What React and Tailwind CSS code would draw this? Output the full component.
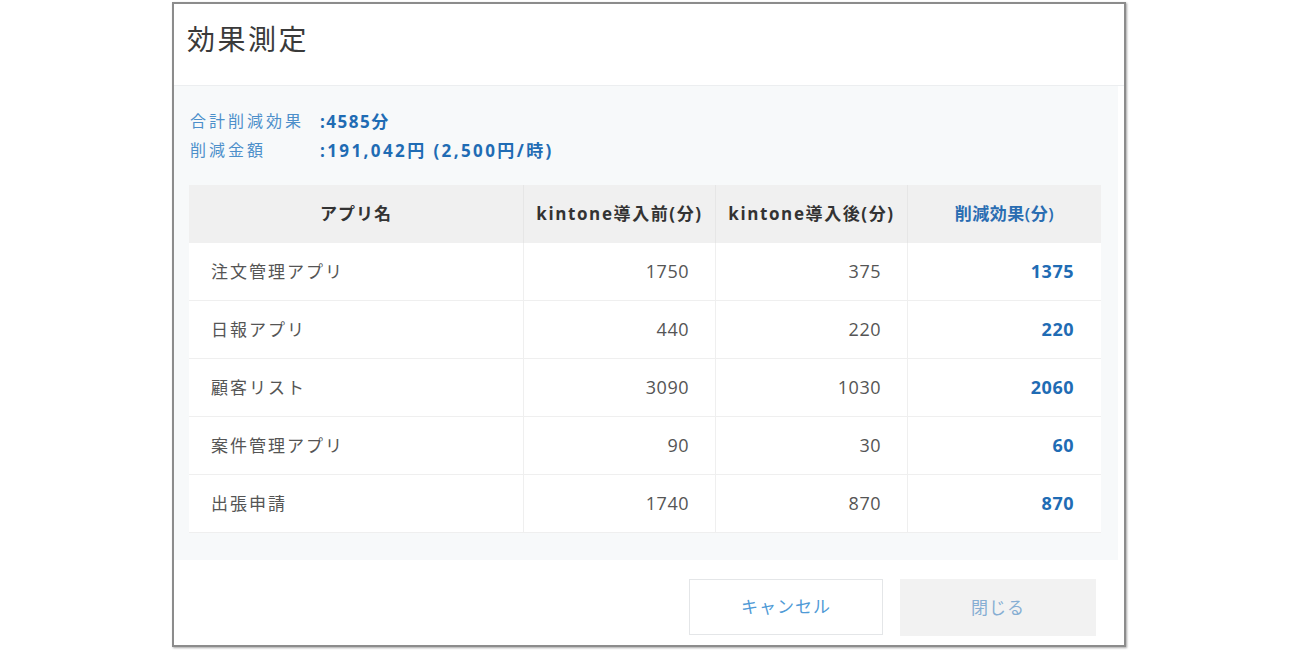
const rows = [
    { name: "注文管理アプリ", before: 1750, after: 375, diff: 1375 },
    { name: "日報アプリ", before: 440, after: 220, diff: 220 },
    { name: "顧客リスト", before: 3090, after: 1030, diff: 2060 },
    { name: "案件管理アプリ", before: 90, after: 30, diff: 60 },
    { name: "出張申請", before: 1740, after: 870, diff: 870 },
];

export default function App() {
    return (
        <main className="w-[1300px] h-[650px] bg-white flex pl-[172px] pt-[2px] font-['Open_Sans','Noto_Sans_CJK_JP',sans-serif]">
            <div className="w-[954px] h-[645px] border-2 border-[#8c8c8c] shadow-[1px_1px_2px_rgba(0,0,0,0.35)] bg-white flex flex-col">
                {/* header */}
                <div className="h-[82px] shrink-0 flex items-center pl-[13px] border-b border-[#eceef0]">
                    <h1 className="text-[28px] tracking-[2.5px] text-[#3a3a3a] font-['Noto_Sans_CJK_JP',sans-serif] leading-none -mt-[14px]">
                        効果測定
                    </h1>
                </div>

                {/* body */}
                <div className="h-[474px] shrink-0 bg-[#f7f9fa] mr-[6px] pl-[15px] pr-[17px] pt-[21px]">
                    <div className="pl-[1px] text-[16px] leading-[29px]">
                        <p className="flex">
                            <span className="w-[130px] text-[#4c8fca] tracking-[3px]">合計削減効果</span>
                            <span className="font-bold text-[#1f6cb4] text-[17px] tracking-[1.5px]">:4585分</span>
                        </p>
                        <p className="flex">
                            <span className="w-[130px] text-[#4c8fca] tracking-[3px]">削減金額</span>
                            <span className="font-bold text-[#1f6cb4] text-[17px] tracking-[2.4px]">:191,042円 (2,500円/時)</span>
                        </p>
                    </div>

                    <div className="mt-[20px] w-[912px] grid grid-cols-[334px_192px_192px_194px] text-[17px]">
                        <div className="h-[58px] bg-[#f0f0f0] flex items-center justify-center font-bold text-[#333] tracking-[1px]">アプリ名</div>
                        <div className="h-[58px] bg-[#f0f0f0] border-l border-[#e6e6e6] flex items-center justify-center font-bold text-[#333] tracking-[1.6px]">kintone導入前(分)</div>
                        <div className="h-[58px] bg-[#f0f0f0] border-l border-[#e6e6e6] flex items-center justify-center font-bold text-[#333] tracking-[1.6px]">kintone導入後(分)</div>
                        <div className="h-[58px] bg-[#f0f0f0] border-l border-[#e6e6e6] flex items-center justify-center font-semibold text-[#2a6db2] tracking-[0.5px]">削減効果(分)</div>

                        {rows.map((r) => (
                            <div key={r.name} className="contents">
                                <div className="h-[58px] bg-white border-b border-[#efefef] flex items-center pl-[22px] text-[#555] tracking-[2px] text-[17px]">{r.name}</div>
                                <div className="h-[58px] bg-white border-b border-l border-[#efefef] flex items-center justify-end pr-[26px] text-[#555] text-[18px] tracking-[0.5px]">{r.before}</div>
                                <div className="h-[58px] bg-white border-b border-l border-[#efefef] flex items-center justify-end pr-[26px] text-[#555] text-[18px] tracking-[0.5px]">{r.after}</div>
                                <div className="h-[58px] bg-white border-b border-l border-[#efefef] flex items-center justify-end pr-[27px] font-bold text-[#1f6cb4] text-[18px] tracking-[0.5px]">{r.diff}</div>
                            </div>
                        ))}
                    </div>
                </div>

                {/* footer */}
                <div className="flex-1 flex justify-end items-start pt-[19px] pr-[28px] gap-[17px]">
                    <button className="w-[194px] h-[56px] bg-white border border-[#e4e6e8] text-[#4f9ad6] text-[17px] tracking-[1px]">
                        キャンセル
                    </button>
                    <button className="w-[196px] h-[57px] bg-[#f2f2f2] text-[#86aed3] text-[17px] tracking-[1px]">
                        閉じる
                    </button>
                </div>
            </div>
        </main>
    );
}
